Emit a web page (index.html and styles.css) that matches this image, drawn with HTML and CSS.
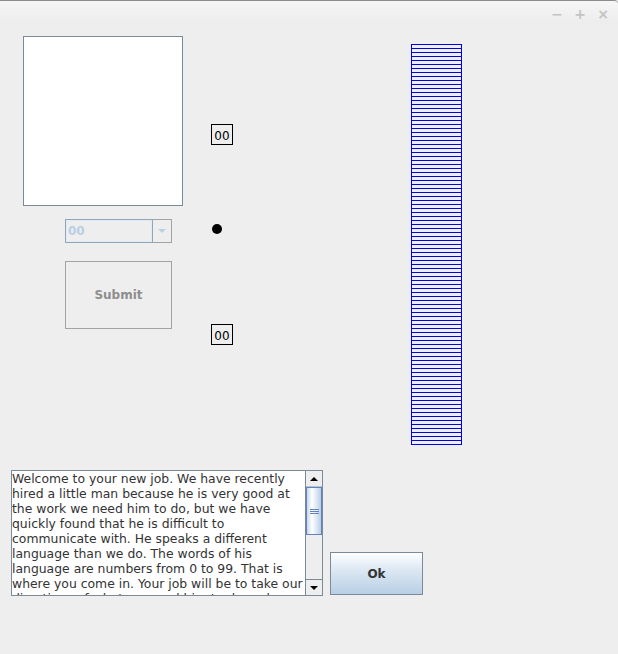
FILE: index.html
```html
<!DOCTYPE html>
<html>
<head>
<meta charset="utf-8">
<link rel="stylesheet" href="styles.css">
</head>
<body>
<div class="window">
  <div class="titlebar">
    <span class="ctl">&minus;</span>
    <span class="ctl">+</span>
    <span class="ctl">&times;</span>
  </div>
  <div class="content">
    <div class="top-row">
      <div class="col-left">
        <div class="canvas-box"></div>
        <div class="combo">
          <div class="combo-field">00</div>
          <div class="combo-btn"><span class="tri"></span></div>
        </div>
        <div class="submit">Submit</div>
      </div>
      <div class="col-mid">
        <div class="num num-top">00</div>
        <div class="dot"></div>
        <div class="num num-bottom">00</div>
      </div>
      <div class="col-right">
        <div class="bars"></div>
      </div>
    </div>
    <div class="bottom-row">
      <div class="textarea">
        <div class="text">
          <div class="line">Welcome to your new job. We have recently</div>
          <div class="line">hired a little man because he is very good at</div>
          <div class="line">the work we need him to do, but we have</div>
          <div class="line">quickly found that he is difficult to</div>
          <div class="line">communicate with. He speaks a different</div>
          <div class="line">language than we do. The words of his</div>
          <div class="line">language are numbers from 0 to 99. That is</div>
          <div class="line">where you come in. Your job will be to take our</div>
          <div class="line">directions of what we need him to do and</div>
        </div>
        <div class="scrollbar">
          <div class="sb-btn"><span class="tri-up"></span></div>
          <div class="sb-thumb"><span class="grip"></span></div>
          <div class="sb-track"></div>
          <div class="sb-btn sb-btn-down"><span class="tri-down"></span></div>
        </div>
      </div>
      <div class="ok">Ok</div>
    </div>
  </div>
</div>
</body>
</html>
```
FILE: styles.css
```css
html, body {
  margin: 0;
  padding: 0;
  background: #eeeeee;
}
body {
  width: 618px;
  height: 654px;
  overflow: hidden;
  font-family: "DejaVu Sans", sans-serif;
}
.window {
  width: 618px;
  height: 654px;
  background: #eeeeee;
}
.titlebar {
  height: 25px;
  border-top: 1px solid #8c8c8c;
  border-top-right-radius: 4px;
  background: linear-gradient(#f6f6f6, #ececec);
  display: flex;
  justify-content: flex-end;
  align-items: center;
  gap: 9px;
  padding-right: 8px;
  box-sizing: border-box;
}
.ctl {
  color: #c3c3c3;
  font-size: 14px;
  font-weight: bold;
  width: 14px;
  text-align: center;
  line-height: 14px;
  margin-top: 1px;
}
.content {
  padding-top: 11px;
}
.top-row {
  display: flex;
  align-items: flex-start;
  padding-left: 23px;
}
.col-left {
  width: 160px;
  display: flex;
  flex-direction: column;
}
.canvas-box {
  width: 160px;
  height: 170px;
  box-sizing: border-box;
  background: #ffffff;
  border: 1px solid #7a8a99;
}
.combo {
  margin-top: 13px;
  margin-left: 42px;
  width: 107px;
  height: 24px;
  display: flex;
}
.combo-field {
  width: 88px;
  height: 24px;
  box-sizing: border-box;
  border: 1px solid #8fa6bd;
  box-shadow: inset 0 0 0 1px #e2ebf4;
  background: #eeeeee;
  color: #b8cfe5;
  font-weight: bold;
  font-size: 12px;
  line-height: 22px;
  padding-left: 2px;
}
.combo-btn {
  width: 19px;
  height: 24px;
  box-sizing: border-box;
  border: 1px solid #a3a3a3;
  border-left: none;
  display: flex;
  align-items: center;
  justify-content: center;
}
.tri {
  width: 0;
  height: 0;
  border-left: 4px solid transparent;
  border-right: 4px solid transparent;
  border-top: 4px solid #b8cfe5;
}
.submit {
  margin-top: 18px;
  margin-left: 42px;
  width: 107px;
  height: 68px;
  box-sizing: border-box;
  border: 1px solid #a3a3a3;
  color: #8e8e8e;
  font-weight: bold;
  font-size: 12px;
  display: flex;
  align-items: center;
  justify-content: center;
}
.col-mid {
  margin-left: 28px;
  width: 22px;
  display: flex;
  flex-direction: column;
}
.num {
  width: 22px;
  height: 21px;
  box-sizing: border-box;
  border: 1px solid #000000;
  font-size: 12px;
  font-weight: normal;
  line-height: 20px;
  padding-top: 1px;
  color: #000000;
  text-align: center;
}
.num-top {
  margin-top: 88px;
}
.dot {
  margin-top: 79px;
  margin-left: 1px;
  width: 10px;
  height: 10px;
  border-radius: 50%;
  background: #000000;
}
.num-bottom {
  margin-top: 90px;
}
.col-right {
  margin-left: 178px;
}
.bars {
  margin-top: 8px;
  width: 51px;
  height: 401px;
  box-sizing: border-box;
  border-left: 1px solid #0000f0;
  border-right: 1px solid #0000f0;
  background: repeating-linear-gradient(#0000f0 0px, #0000f0 1px, #eeeeee 1px, #eeeeee 4px);
  border-bottom: 1px solid #0000f0;
}
.bottom-row {
  margin-top: 25px;
  padding-left: 11px;
  display: flex;
  align-items: flex-end;
}
.textarea {
  width: 312px;
  height: 126px;
  box-sizing: border-box;
  border: 1px solid #7a8a99;
  background: #ffffff;
  display: flex;
  overflow: hidden;
}
.text {
  width: 294px;
  overflow: hidden;
  font-size: 12.4px;
  line-height: 15px;
  color: #333333;
}
.line {
  white-space: nowrap;
}
.scrollbar {
  width: 16px;
  display: flex;
  flex-direction: column;
  border-left: 1px solid #7a8a99;
  background: #eeeeee;
}
.sb-btn {
  height: 15px;
  border-bottom: 1px solid #b8c4d0;
  background: #eeeeee;
  display: flex;
  align-items: center;
  justify-content: center;
}
.sb-btn-down {
  border-bottom: none;
  border-top: 1px solid #7a8a99;
}
.tri-up {
  width: 0;
  height: 0;
  border-left: 4px solid transparent;
  border-right: 4px solid transparent;
  border-bottom: 4px solid #000000;
}
.tri-down {
  width: 0;
  height: 0;
  border-left: 4px solid transparent;
  border-right: 4px solid transparent;
  border-top: 4px solid #000000;
}
.sb-thumb {
  height: 48px;
  box-sizing: border-box;
  border: 1px solid #6382bf;
  background: linear-gradient(90deg, #c7d7ea, #ffffff 35%, #dbe6f3 70%, #b8cfe5);
  display: flex;
  align-items: center;
  justify-content: center;
}
.grip {
  width: 9px;
  height: 5px;
  background: repeating-linear-gradient(#6382bf 0px, #6382bf 1px, transparent 1px, transparent 2px);
}
.sb-track {
  flex: 1;
  background: #eeeeee;
}
.ok {
  margin-left: 7px;
  width: 93px;
  height: 43px;
  margin-bottom: 1px;
  box-sizing: border-box;
  border: 1px solid #7a8a99;
  background: linear-gradient(#ffffff, #dde8f3 40%, #b8cfe5);
  color: #333333;
  font-weight: bold;
  font-size: 12px;
  display: flex;
  align-items: center;
  justify-content: center;
}
```
